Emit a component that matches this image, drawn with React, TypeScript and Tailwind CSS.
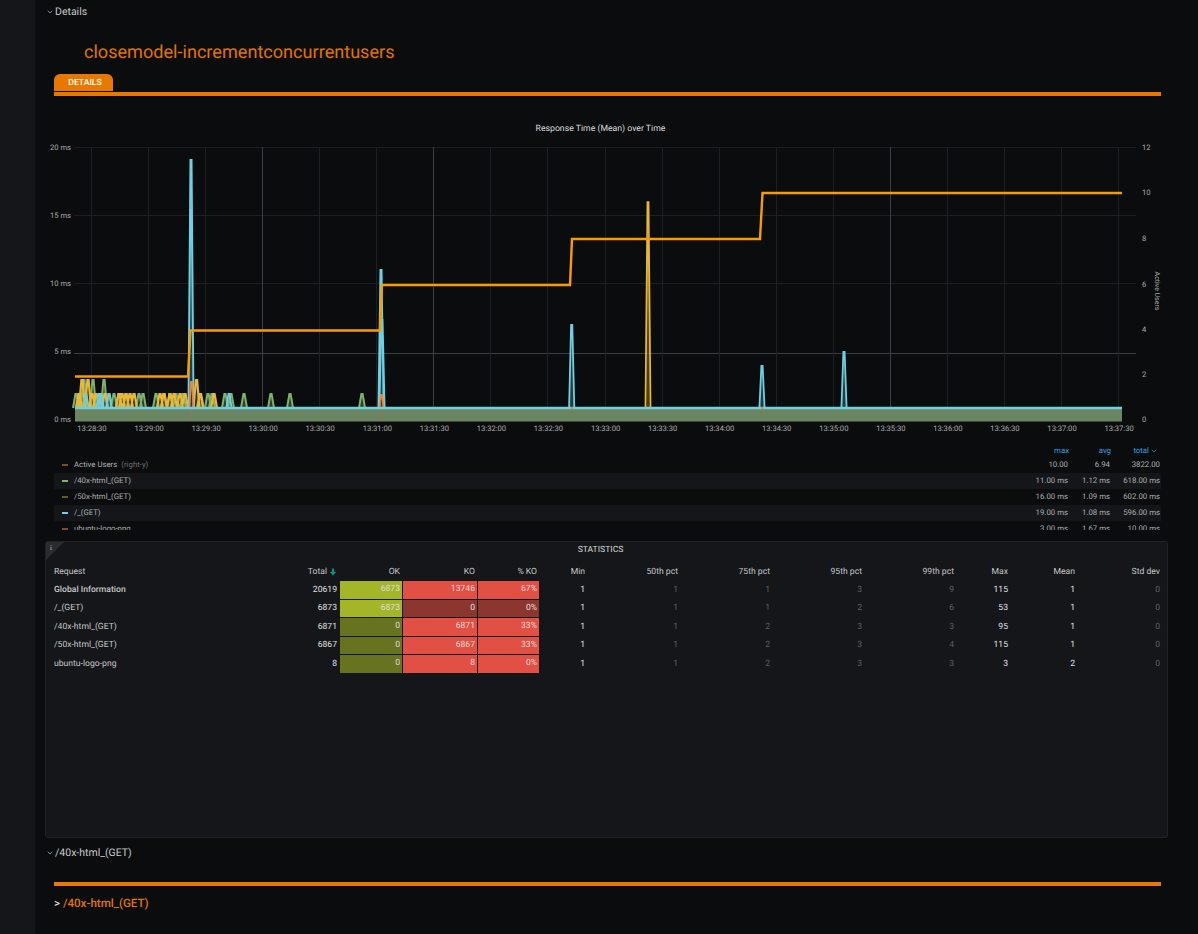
import { ChevronDown } from 'lucide-react';

const X0 = 92;
const XSTEP = 57.06;
const times = ['13:28:30','13:29:00','13:29:30','13:30:00','13:30:30','13:31:00','13:31:30','13:32:00','13:32:30','13:33:00','13:33:30','13:34:00','13:34:30','13:35:00','13:35:30','13:36:00','13:36:30','13:37:00','13:37:30'];
const brightX = [3, 6, 14];

const BASE = 408;

function peaks(list: [number, number][], w = 2.5) {
  return list
    .map(([x, top]) => `M${x - w} ${BASE} L${x - 0.6} ${top} L${x + 0.6} ${top} L${x + w} ${BASE}`)
    .join(' ');
}

const green: [number, number][] = [[76,394],[80,394],[84,380],[93,380],[104,380],[109,394],[114,394],[119,394],[126,394],[139,394],[143,394],[156,394],[164,394],[170,394],[176,394],[183,394],[200,394],[208,394],[212,394],[225,394],[231,394],[244,394],[271,394],[290,394],[362,394]];
const yellow: [number, number][] = [[79,394],[82,380],[88,380],[92,394],[96,394],[105,394],[119,394],[122,394],[126,394],[130,394],[134,394],[160,394],[164,394],[170,394],[174,394],[180,394],[185,394],[196.5,380],[200.5,394],[214,394]];
const cyan: [number, number][] = [[86,394],[99,394],[101,394],[109,394],[229,394],[191,160],[191,210],[381,270],[382,320],[571.7,325],[762,366],[844,352]];
const orange: [number, number][] = [[191.5,382],[381.5,395]];

const legend = [
  { name: 'Active Users', extra: '(right-y)', color: 'bg-[#7a5216]', max: '10.00', avg: '6.94', total: '3822.00' },
  { name: '/40x-html_(GET)', color: 'bg-[#7eb26d]', max: '11.00 ms', avg: '1.12 ms', total: '618.00 ms' },
  { name: '/50x-html_(GET)', color: 'bg-[#6b5a1f]', max: '16.00 ms', avg: '1.09 ms', total: '602.00 ms' },
  { name: '/_(GET)', color: 'bg-[#6ed0e0]', max: '19.00 ms', avg: '1.08 ms', total: '596.00 ms' },
  { name: 'ubuntu-logo-png', color: 'bg-[#8a4a20]', max: '3.00 ms', avg: '1.67 ms', total: '10.00 ms' },
];

const rows = [
  { name: 'Global Information', bold: true, total: '20619', ok: '6873', okOn: true, ko: '13746', koOn: true, pct: '67%', pctOn: true, stats: ['1','1','1','3','9','115','1','0'] },
  { name: '/_(GET)', total: '6873', ok: '6873', okOn: true, ko: '0', koOn: false, pct: '0%', pctOn: false, stats: ['1','1','1','2','6','53','1','0'] },
  { name: '/40x-html_(GET)', total: '6871', ok: '0', okOn: false, ko: '6871', koOn: true, pct: '33%', pctOn: true, stats: ['1','1','2','3','3','95','1','0'] },
  { name: '/50x-html_(GET)', total: '6867', ok: '0', okOn: false, ko: '6867', koOn: true, pct: '33%', pctOn: true, stats: ['1','1','2','3','4','115','1','0'] },
  { name: 'ubuntu-logo-png', total: '8', ok: '0', okOn: false, ko: '8', koOn: true, pct: '0%', pctOn: true, stats: ['1','1','2','3','3','3','2','0'] },
];

const statHeads = ['Min', '50th pct', '75th pct', '95th pct', '99th pct', 'Max', 'Mean', 'Std dev'];
const dimCols = [1, 2, 3, 4, 7];
const gridCols = 'grid grid-cols-[240px_54px_63px_75px_62px_48px_93px_92px_92px_92px_54px_67px_85px]';

function Chart() {
  return (
    <svg width="1198" height="320" viewBox="0 120 1198 320" className="block -ml-[35px]" fontFamily="Roboto, sans-serif">
      <text x="600.5" y="131" textAnchor="middle" fontSize="8.7" fill="#d8d9da">Response Time (Mean) over Time</text>

      {[147.5, 215.5, 283.5, 353.5].map((y, i) => (
        <line key={y} x1="74" x2="1136" y1={y} y2={y} stroke={i === 3 ? '#3c3e42' : '#1d1f22'} />
      ))}
      {times.map((_, i) => {
        const x = Math.round(X0 + i * XSTEP) - 0.5;
        return <line key={i} x1={x} x2={x} y1="147" y2="421" stroke={brightX.includes(i) ? '#3c3e42' : '#1d1f22'} />;
      })}

      {[['20 ms', 150], ['15 ms', 218], ['10 ms', 286], ['5 ms', 354], ['0 ms', 422]].map(([t, y]) => (
        <text key={t} x="71" y={y} textAnchor="end" fontSize="7.6" fill="#a8a9ac">{t}</text>
      ))}
      {[['12', 150], ['10', 195], ['8', 241], ['6', 287], ['4', 332], ['2', 377], ['0', 422]].map(([t, y]) => (
        <text key={t + String(y)} x="1142" y={y} fontSize="7.6" fill="#a8a9ac">{t}</text>
      ))}
      {times.map((t, i) => (
        <text key={t} x={X0 + i * XSTEP} y="431" textAnchor="middle" fontSize="7.6" fill="#a8a9ac">{t}</text>
      ))}
      <text transform="translate(1154.5 291) rotate(90)" textAnchor="middle" fontSize="7" fill="#a8a9ac">Active Users</text>

      <rect x="75" y="408" width="1047" height="13.5" fill="#6b8563" />
      <line x1="191.5" x2="191.5" y1="408" y2="421" stroke="#8e7a4e" />
      <line x1="382" x2="382" y1="408" y2="421" stroke="#8e7a4e" />

      <path d={peaks(green, 3)} fill="#7eb26d" fillOpacity="0.3" stroke="#7eb26d" strokeWidth="2" />
      <path d={peaks(yellow, 3)} fill="#eab839" fillOpacity="0.2" stroke="#eab839" strokeWidth="2.2" />
      <path d={peaks([[648, 202], [648, 240]], 2.6)} fill="#eab839" fillOpacity="0.3" stroke="#eab839" strokeWidth="1.6" />
      <path d={peaks(cyan, 2.6)} fill="#6ed0e0" fillOpacity="0.25" stroke="#6ed0e0" strokeWidth="1.8" />
      <path d={peaks(orange, 2)} fill="none" stroke="#ef843c" strokeWidth="1.8" />
      <line x1="75" x2="1122" y1="408" y2="408" stroke="#6ed0e0" strokeWidth="2.4" />
      <rect x="570.5" y="407" width="2.5" height="2" fill="#ef843c" />
      <rect x="761" y="407" width="2.5" height="2" fill="#ef843c" />

      <path
        d="M75 376.5 H188 L190.5 330.5 H380 L382 285 H570 L572 239 H760 L762.5 193 H1122"
        fill="none"
        stroke="#f79d00"
        strokeWidth="2.4"
      />
    </svg>
  );
}

function Legend() {
  return (
    <div className="mt-[4px] ml-[19px] mr-[37px] h-[86px] overflow-hidden text-[7.8px] text-[#b0b1b4]">
      <div className="flex h-[13px] items-center justify-end text-[#33a2e5]">
        <span className="w-[60px] text-right">max</span>
        <span className="w-[42px] text-right">avg</span>
        <span className="w-[50px] pr-[3px] text-right">
          total
          <ChevronDown size={8} className="ml-[1px] inline" />
        </span>
      </div>
      {legend.map((l, i) => (
        <div key={l.name} className={`flex h-[16px] items-center pl-[8px] pr-[1px] ${i % 2 === 1 ? 'bg-[#141619]' : ''}`}>
          <span className={`mr-[6px] h-[1.5px] w-[6px] ${l.color}`} />
          <span>{l.name}</span>
          {l.extra && <span className="ml-[4px] text-[#6e7074]">{l.extra}</span>}
          <span className="ml-auto w-[60px] text-right">{l.max}</span>
          <span className="w-[42px] text-right">{l.avg}</span>
          <span className="w-[50px] text-right">{l.total}</span>
        </div>
      ))}
    </div>
  );
}

function Statistics() {
  return (
    <div className="relative ml-[10px] mr-[30px] h-[297px] rounded-[3px] border border-[#202226] bg-[#141619] text-[8.6px] text-[#c7c8ca]">
      <div className="absolute left-0 top-0 h-0 w-0 border-r-[18px] border-t-[18px] border-r-transparent border-t-[#2a2c30]" />
      <span className="absolute left-[4px] top-[1px] font-['Liberation_Serif',serif] text-[7px] text-[#c7c8ca]">i</span>
      <div className="flex h-[16px] items-center justify-center pr-[12px] text-[#d8d9da]">STATISTICS</div>
      <div className={`${gridCols} mt-[6px] mb-[1px] h-[16px] items-center`}>
        <div className="pl-[8px]">Request</div>
        <div className="flex items-center justify-end pr-[3px]">
          Total
          <svg width="8" height="8" viewBox="0 0 8 8" className="ml-[2px]">
            <path d="M3 0.5h2v3.2h2.4L4 7.5 0.6 3.7H3z" fill="#0d8f8f" />
          </svg>
        </div>
        <div className="pr-[3px] text-right">OK</div>
        <div className="pr-[3px] text-right">KO</div>
        <div className="pr-[3px] text-right">% KO</div>
        {statHeads.map((h) => (
          <div key={h} className="pr-[3px] text-right">{h}</div>
        ))}
      </div>
      {rows.map((r) => (
        <div key={r.name} className={`${gridCols} h-[18.5px] items-stretch`}>
          <div className={`flex items-center pl-[8px] ${r.bold ? 'font-medium' : ''}`}>{r.name}</div>
          <div className="flex items-center justify-end pr-[3px] text-[#e2e3e4]">{r.total}</div>
          <div className={`mr-[1px] mb-[1px] flex items-center justify-end pr-[2px] text-[#dcdde0] ${r.okOn ? 'bg-[#a4b527]' : 'bg-[#687320]'}`}>{r.ok}</div>
          <div className={`mr-[1px] mb-[1px] flex items-center justify-end pr-[2px] text-[#ecdcda] ${r.koOn ? 'bg-[#e24f43]' : 'bg-[#8c3630]'}`}>{r.ko}</div>
          <div className={`mb-[1px] mr-[1px] flex items-center justify-end pr-[2px] text-[#ecdcda] ${r.pctOn ? 'bg-[#e24f43]' : 'bg-[#8c3630]'}`}>{r.pct}</div>
          {r.stats.map((s, i) => (
            <div key={i} className={`flex items-center justify-end pr-[3px] ${dimCols.includes(i) ? 'text-[#5f6165]' : 'text-[#e2e3e4]'}`}>{s}</div>
          ))}
        </div>
      ))}
    </div>
  );
}

export default function App() {
  return (
    <div className="flex h-[934px] w-[1198px] overflow-hidden bg-[#0b0c0e] font-['Roboto',sans-serif] [text-rendering:geometricPrecision]">
      <div className="w-[35px] shrink-0 bg-[#141619]" />
      <div className="min-w-0 flex-1">
        <div className="flex h-[24px] items-center pl-[11px] text-[10.5px] text-[#c7c8ca]">
          <ChevronDown size={8} className="mr-[1px]" />
          Details
        </div>
        <h1 className="ml-[49px] mt-[18px] text-[18.1px] leading-[22px] font-normal text-[#e07400]">closemodel-incrementconcurrentusers</h1>
        <div className="ml-[19px] mr-[37px] mt-[10px]">
          <div className="flex h-[17px] w-[59px] items-center justify-center rounded-t-[6px] bg-[#e87800] pl-[3px] pt-[1px] text-[8.6px] font-medium text-white">DETAILS</div>
          <div className="mt-[1px] h-[4px] bg-[#e87800]" />
        </div>
        <div className="mt-[24px]">
          <Chart />
        </div>
        <Legend />
        <div className="mt-[11px]">
          <Statistics />
        </div>
        <div className="mt-[7px] flex h-[16px] items-center pl-[11px] text-[10.5px] text-[#c7c8ca]">
          <ChevronDown size={8} className="mr-[1px]" />
          /40x-html_(GET)
        </div>
        <div className="ml-[19px] mr-[37px] mt-[21px] h-[4px] bg-[#e87800]" />
        <div className="ml-[19px] mt-[9px] text-[11.6px] leading-[16px] font-medium text-[#e07400]">
          <span className="text-[#d8d9da]">&gt;</span>
          {' '}/40x-html_(GET)
        </div>
      </div>
    </div>
  );
}
